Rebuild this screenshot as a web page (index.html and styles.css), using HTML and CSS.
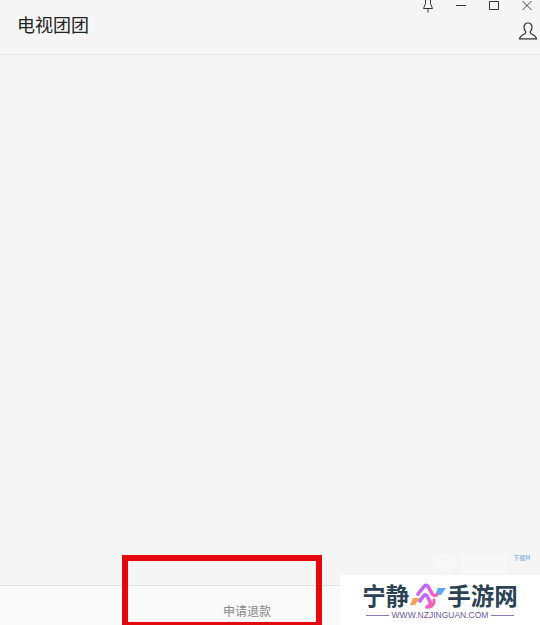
FILE: index.html
```html
<!DOCTYPE html>
<html lang="zh">
<head>
<meta charset="UTF-8">
<title>电视团团</title>
<link rel="stylesheet" href="styles.css">
</head>
<body>

  <div class="app">
    <header class="topbar">
      <h1 class="title">电视团团</h1>
      <div class="topbar-right">
        <div class="win-controls">
          <svg class="win-icon" viewBox="0 0 14 14" fill="none" stroke="#333" stroke-width="1">
            <path d="M4.5 0V3.5L2.5 8.5H11.5L9.5 3.5V0M7 8.5V12.5"/>
          </svg>
          <svg class="win-icon" viewBox="0 0 14 14" fill="none" stroke="#333" stroke-width="1">
            <path d="M2 5.5H12"/>
          </svg>
          <svg class="win-icon" viewBox="0 0 14 14" fill="none" stroke="#333" stroke-width="1">
            <path d="M2.5 1.5H11.5V9.5H2.5Z"/>
          </svg>
          <svg class="win-icon" viewBox="0 0 14 14" fill="none" stroke="#444" stroke-width="1">
            <path d="M2.5 1L11.5 10M11.5 1L2.5 10"/>
          </svg>
        </div>
        <svg class="user-icon" viewBox="0 0 20 18" fill="none" stroke="#333" stroke-width="1.2">
          <path d="M10 1C7.2 1 6 3 6 5.3C6 7.4 7 8.8 7.8 9.8C8 10.8 7.4 11.5 6 12.2C4 13.1 2 14 1.5 16.8H18.5C18 14 16 13.1 14 12.2C12.6 11.5 12 10.8 12.2 9.8C13 8.8 14 7.4 14 5.3C14 3 12.8 1 10 1Z"/>
        </svg>
      </div>
    </header>

    <main class="content"></main>

    <footer class="bottombar">
      <span class="refund">申请退款</span>
    </footer>
  </div>

  <!-- annotation and watermarks on top of the screenshot -->
  <div class="red-box"></div>

  <div class="faint-mark">
    <div class="faint-logo"></div>
    <div class="faint-text"></div>
    <span class="faint-dl">下载M</span>
  </div>

  <div class="site-mark">
    <div class="site-name">
      <span>宁静</span>
      <svg class="site-logo" viewBox="0 0 36 26" fill="none">
        <defs>
          <linearGradient id="ribbon" x1="0" y1="0" x2="1" y2="1">
            <stop offset="0" stop-color="#8a7cf6"/>
            <stop offset="0.45" stop-color="#e45df0"/>
            <stop offset="1" stop-color="#fb5fb4"/>
          </linearGradient>
        </defs>
        <path d="M3 15H10L5 22H0Z" fill="#f9a15a"/>
        <path d="M28 5H36L31 12H25Z" fill="#5fa8f5"/>
        <path d="M8 11L14 3.500C15 2 17 2 18 3.500L22 10.500C23 12.500 25 13 26.500 12" stroke="url(#ribbon)" stroke-width="3.600" stroke-linecap="round"/>
        <path d="M10 18L13.500 13C14.500 11.500 16 11.500 17 13L20 18.500C21 21 19.500 23 17 24" stroke="url(#ribbon)" stroke-width="3.600" stroke-linecap="round"/>
        <path d="M24 17C24.500 20 23 22.500 20 24" stroke="#fb5fb4" stroke-width="3" stroke-linecap="round"/>
      </svg>
      <span>手游网</span>
    </div>
    <div class="site-url">
      <i class="site-line"></i>
      <span>WWW.NZJINGUAN.COM</span>
      <i class="site-line"></i>
    </div>
  </div>

</body>
</html>
```

FILE: styles.css
```css
html,body {
  margin: 0;
  padding: 0;
  height: 100%;
  overflow: hidden;
  font-family: "Noto Sans CJK SC", "Liberation Sans", sans-serif;
}
.app {
  display: flex;
  flex-direction: column;
  height: 625px;
  background: #f5f5f5;
}
.topbar {
  height: 54px;
  flex: none;
  display: flex;
  justify-content: space-between;
  border-bottom: 1px solid #e4e4e4;
}
.title {
  margin: 11px 0 0 17px;
  font-size: 18px;
  line-height: 26px;
  font-weight: 400;
  color: #222;
}
.topbar-right {
  display: flex;
  flex-direction: column;
  align-items: flex-end;
}
.win-controls {
  display: flex;
  gap: 19px;
  padding-right: 6px;
}
.win-icon {
  width: 14px;
  height: 14px;
  display: block;
}
.user-icon {
  width: 20px;
  height: 18px;
  margin: 8px 2px 0 0;
  display: block;
}
.content {
  flex: 1;
}
.bottombar {
  height: 40px;
  flex: none;
  background: #fafafa;
  border-top: 1px solid #e2e2e2;
  display: flex;
  padding: 16px 0 0 223px;
  box-sizing: border-box;
}
.refund {
  font-size: 12px;
  line-height: 18px;
  color: #888;
}
.red-box {
  position: absolute;
  left: 122px;
  top: 555px;
  width: 200px;
  height: 70px;
  box-sizing: border-box;
  border: 6px solid #e30a0f;
  border-bottom-width: 3px;
  box-shadow: inset 0 0 1px #f39a9a;
}
.faint-mark {
  position: absolute;
  left: 437px;
  top: 552px;
  width: 93px;
  height: 23px;
}
.faint-logo {
  width: 20px;
  height: 20px;
  border-radius: 50%;
  background: #f8f8f8;
}
.faint-text {
  position: absolute;
  left: 25px;
  top: 4px;
  width: 45px;
  height: 18px;
  background: #f7f7f7;
}
.faint-dl {
  position: absolute;
  right: 0;
  top: 2px;
  font-size: 6px;
  line-height: 8px;
  color: #5b9bd5;
}
.site-mark {
  position: absolute;
  left: 340px;
  top: 575px;
  width: 200px;
  height: 50px;
  background: #fff;
  display: flex;
  flex-direction: column;
  align-items: center;
}
.site-name {
  display: flex;
  align-items: center;
  gap: 3px;
  margin-top: 7px;
  font-size: 23.5px;
  line-height: 27px;
  font-weight: 700;
  color: #2a4254;
}
.site-logo {
  width: 36px;
  height: 26px;
  margin: 0 -2px;
  display: block;
}
.site-url {
  display: flex;
  align-items: center;
  gap: 3px;
  margin-top: 1px;
  font-family: "Liberation Sans", sans-serif;
  font-size: 8.5px;
  line-height: 10px;
  color: #6b5a9c;
}
.site-line {
  width: 23px;
  height: 1px;
  background: #8a78b8;
}
```
